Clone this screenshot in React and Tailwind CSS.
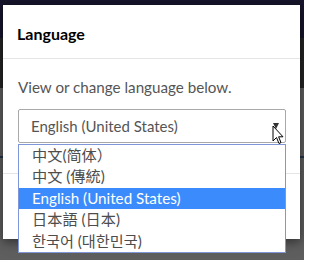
import React from 'react'

const languages = [
  { code: 'zh-CN', label: '中文(简体）' },
  { code: 'zh-TW', label: '中文 (傳統)' },
  { code: 'en-US', label: 'English (United States)' },
  { code: 'ja-JP', label: '日本語 (日本)' },
  { code: 'ko-KR', label: '한국어 (대한민국)' },
]

const font = { fontFamily: 'Lato, "Noto Sans CJK SC", "Noto Sans CJK KR", sans-serif' }

function Cursor() {
  return (
    <svg width="12" height="20" viewBox="0 0 12 20" className="absolute left-[272px] top-[125px]">
      <path
        d="M1 1 L1 16 L4.5 12.5 L7 18.5 L9 17.6 L6.6 11.8 L11 11.8 Z"
        fill="#fff"
        stroke="#000"
        strokeWidth="1"
        strokeLinejoin="miter"
      />
    </svg>
  )
}

function LanguageList({ selected }) {
  return (
    <ul className="absolute left-[18px] top-[144px] w-[268px] border border-[#7f96d8] bg-white">
      {languages.map((l) => (
        <li
          key={l.code}
          className={
            'h-[21.4px] pl-[13px] text-[15.2px] leading-[21px] ' +
            (l.code === selected ? 'bg-[#3b8bfd] text-white' : 'text-[#4d4d4d]')
          }
        >
          {l.label}
        </li>
      ))}
    </ul>
  )
}

export default function App() {
  const selected = 'en-US'
  return (
    <div className="relative w-[304px] h-[260px] overflow-hidden" style={font}>
      <div className="flex flex-col h-full">
        <div className="h-[38px] bg-[#15142b]" />
        <div className="h-[50px] bg-[#242424]" />
        <div className="h-[68px] bg-[#5e5e5e]" />
        <div className="h-[2px] bg-[#1f3345]" />
        <div className="flex-1 bg-[#5e5e5e]" />
      </div>

      <div className="absolute left-[3px] top-[5px] w-[297px] h-[234px] bg-white shadow-[0_3px_10px_rgba(0,0,0,0.5)]">
        <div className="h-[54px] border-b border-[#e5e5e5] px-[14px] pt-[19px]">
          <h4 className="text-[16px] font-bold leading-[20px] text-black">Language</h4>
        </div>
        <div className="px-[15px] pt-[17px]">
          <p className="text-[15.2px] leading-[22px] text-[#555]">View or change language below.</p>
          <div className="mt-[11px] w-[268px] h-[34px] border border-[#a9a9a9] rounded-[2px] flex items-center pl-[12px] relative">
            <span className="text-[15px] text-[#555]">English (United States)</span>
            <span className="absolute right-[6px] top-[13px] w-0 h-0 border-l-[3.5px] border-r-[3.5px] border-t-[6px] border-l-transparent border-r-transparent border-t-[#333]" />
          </div>
        </div>
        <div className="mt-[30px] border-t border-[#e5e5e5]" />
      </div>

      <LanguageList selected={selected} />
      <Cursor />
    </div>
  )
}
